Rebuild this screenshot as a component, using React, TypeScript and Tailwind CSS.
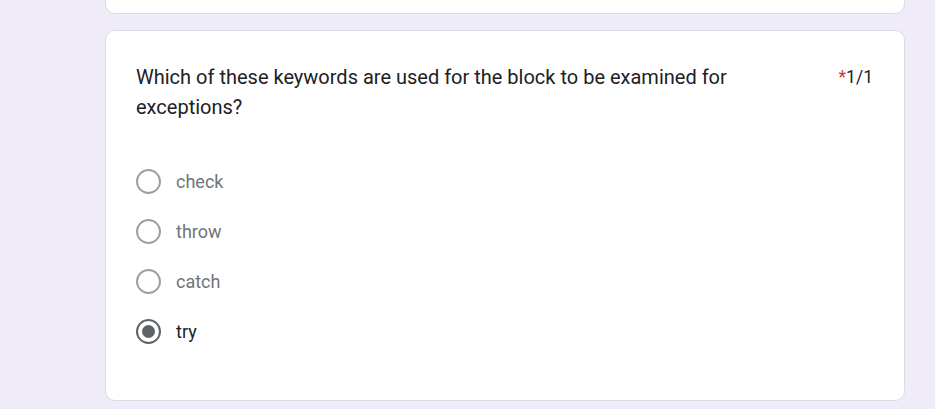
import React from "react";

const options = [
  { label: "check", selected: false },
  { label: "throw", selected: false },
  { label: "catch", selected: false },
  { label: "try", selected: true },
];

function Radio({ selected }: { selected: boolean }) {
  return (
    <div
      className={
        "flex h-[25px] w-[25px] shrink-0 items-center justify-center rounded-full border-2 " +
        (selected ? "border-[#5f6368]" : "border-[#9aa0a6]")
      }
    >
      {selected && <div className="h-[13px] w-[13px] rounded-full bg-[#5f6368]" />}
    </div>
  );
}

export default function App() {
  return (
    <div
      className="h-[409px] w-[935px] overflow-hidden bg-[#f0ebf8]"
      style={{ fontFamily: "Roboto, 'Liberation Sans', sans-serif" }}
    >
      <div className="ml-[105px] flex w-[800px] flex-col gap-4 -mt-[10px]">
        <div className="h-[24px] rounded-[10px] border border-[#dadce0] bg-white" />
        <div className="h-[371px] rounded-[10px] border border-[#dadce0] bg-white pl-[30px] pr-[31px] pt-[31px]">
          <div className="flex items-start justify-between">
            <div className="w-[640px] text-[20px] leading-[30px] text-[#202124]">
              Which of these keywords are used for the block to be examined for exceptions?
            </div>
            <div className="text-[17.5px] leading-[30px] text-[#202124]">
              <span className="text-[#d93025]">*</span>1/1
            </div>
          </div>
          <div className="mt-[47px] flex flex-col gap-[25px]">
            {options.map((o) => (
              <div key={o.label} className="flex items-center gap-[15px]">
                <Radio selected={o.selected} />
                <span
                  className={
                    "text-[18px] leading-[25px] " +
                    (o.selected ? "text-[#202124]" : "text-[#70757a]")
                  }
                >
                  {o.label}
                </span>
              </div>
            ))}
          </div>
        </div>
      </div>
    </div>
  );
}
